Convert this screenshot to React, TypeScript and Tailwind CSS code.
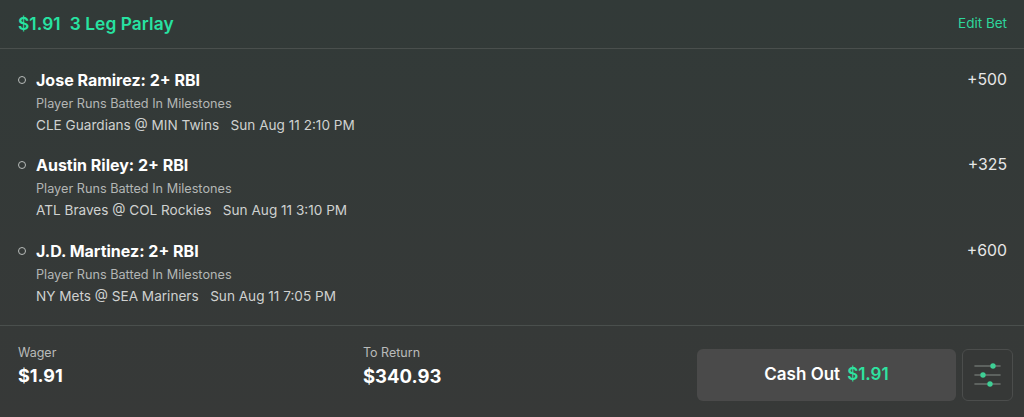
const legs = [
  {
    name: 'Jose Ramirez: 2+ RBI',
    market: 'Player Runs Batted In Milestones',
    game: 'CLE Guardians @ MIN Twins',
    time: 'Sun Aug 11 2:10 PM',
    odds: '+500',
  },
  {
    name: 'Austin Riley: 2+ RBI',
    market: 'Player Runs Batted In Milestones',
    game: 'ATL Braves @ COL Rockies',
    time: 'Sun Aug 11 3:10 PM',
    odds: '+325',
  },
  {
    name: 'J.D. Martinez: 2+ RBI',
    market: 'Player Runs Batted In Milestones',
    game: 'NY Mets @ SEA Mariners',
    time: 'Sun Aug 11 7:05 PM',
    odds: '+600',
  },
];

function SlidersIcon() {
  return (
    <svg width="27" height="24" viewBox="0 0 27 24" fill="none">
      <line x1="1" y1="3" x2="26" y2="3" stroke="#6b706e" strokeWidth="1.6" strokeLinecap="round" />
      <line x1="1" y1="12" x2="26" y2="12" stroke="#6b706e" strokeWidth="1.6" strokeLinecap="round" />
      <line x1="1" y1="21" x2="26" y2="21" stroke="#6b706e" strokeWidth="1.6" strokeLinecap="round" />
      <circle cx="19" cy="3" r="2.7" fill="#3ecf95" />
      <circle cx="9" cy="12" r="2.7" fill="#3ecf95" />
      <circle cx="16" cy="21" r="2.7" fill="#3ecf95" />
    </svg>
  );
}

export default function App() {
  return (
    <div
      className="w-[1024px] h-[417px] overflow-hidden bg-gradient-to-b from-[#323a38] to-[#373938] text-white flex flex-col"
      style={{ fontFamily: 'Inter, "Noto Sans", sans-serif' }}
    >
      <div className="h-[49px] flex items-center justify-between pl-[18px] pr-[17px] border-b border-[#4a4f4d]">
        <div className="text-[17.3px] font-semibold text-[#27e3a2] tracking-[0.1px]">
          $1.91&nbsp;&nbsp;3 Leg Parlay
        </div>
        <div className="text-[13.5px] text-[#2ed69c] -mt-[2px]">Edit Bet</div>
      </div>

      <div className="flex flex-col pt-[20px] h-[277px] border-b border-[#4a4f4d]">
        {legs.map((leg) => (
          <div key={leg.name} className="h-[86px] flex pl-[18px] pr-[17px]">
            <div className="w-[18px] pt-[7px]">
              <div className="w-[8px] h-[8px] rounded-full border-[1.5px] border-[#b8bcba]" />
            </div>
            <div className="flex-1 flex flex-col">
              <div className="text-[16px] font-bold leading-[22px]">{leg.name}</div>
              <div className="text-[12.7px] text-[#b3b6b5] leading-[16px] mt-[5px]">{leg.market}</div>
              <div className="text-[13.6px] text-[#cfd1d0] leading-[18px] mt-[4px]">
                {leg.game}&nbsp;&nbsp;&nbsp;{leg.time}
              </div>
            </div>
            <div className="text-[15.8px] text-[#e6e7e7] leading-[22px]">{leg.odds}</div>
          </div>
        ))}
      </div>

      <div className="flex-1 flex items-start pl-[18px] pr-[11px] pt-[19px]">
        <div className="w-[345px] flex flex-col">
          <div className="text-[12.5px] text-[#b9bbba] leading-[16px]">Wager</div>
          <div className="text-[18px] font-bold leading-[24px] mt-[3px]">$1.91</div>
        </div>
        <div className="flex-1 flex flex-col">
          <div className="text-[12.5px] text-[#b9bbba] leading-[16px]">To Return</div>
          <div className="text-[18.5px] font-bold leading-[24px] mt-[3px]">$340.93</div>
        </div>
        <div className="mt-[4px] w-[259px] h-[52px] rounded-[6px] bg-[#4a4a4a] flex items-center justify-center gap-[7px] text-[17px] font-semibold">
          <span>Cash Out</span>
          <span className="text-[#2ee3a0]">$1.91</span>
        </div>
        <div className="mt-[4px] ml-[6px] w-[51px] h-[52px] rounded-[6px] border border-[#4b4d4c] bg-[#363837] flex items-center justify-center">
          <SlidersIcon />
        </div>
      </div>
    </div>
  );
}
